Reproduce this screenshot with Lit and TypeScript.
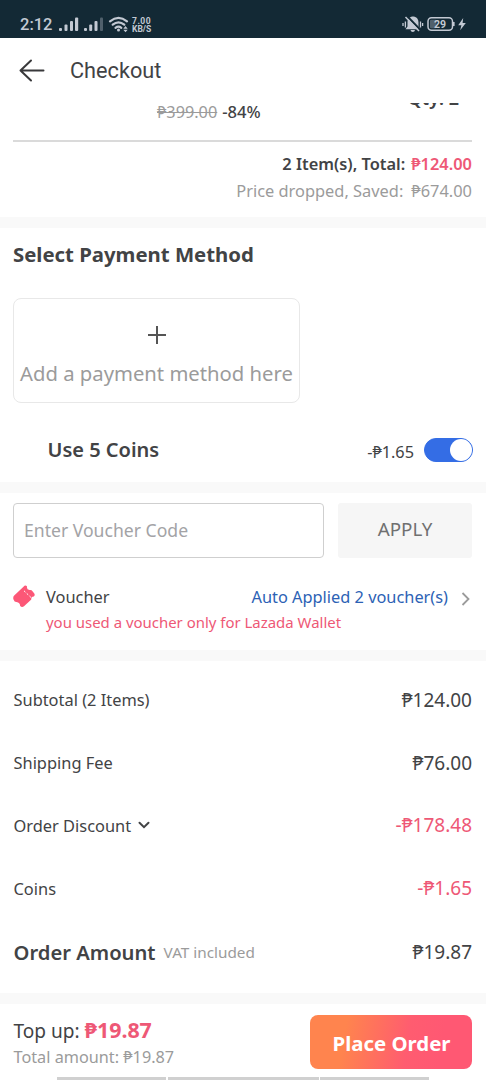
import { LitElement, html, css } from "lit";
import { customElement, property } from "lit/decorators.js";

@customElement("status-bar")
class StatusBar extends LitElement {
  static styles = css`
    :host {
      display: flex;
      justify-content: space-between;
      height: 38px;
      box-sizing: border-box;
      padding: 14px 18px 0 20px;
      background: #132935;
      color: #c3c9d3;
      font-family: Roboto, sans-serif;
    }
    .left,
    .right {
      display: flex;
      align-items: center;
      height: 20px;
    }
    .time {
      font-size: 16.5px;
      font-weight: 500;
      width: 38px;
      line-height: 20px;
      padding-top: 2px;
    }
    .speed {
      display: flex;
      flex-direction: column;
      font-size: 8.5px;
      line-height: 8px;
      font-weight: 700;
      margin-left: 2px;
      padding-top: 1px;
    }
    .rate {
      letter-spacing: 0.5px;
      height: 8px;
    }
    svg {
      display: block;
      flex: none;
    }
  `;
  render() {
    return html`
      <div class="left">
        <span class="time">2:12</span>
        <svg width="72" height="20" viewBox="58 14 72 20" fill="#c3c9d3">
          <rect x="59" y="28" width="3" height="3" rx="1" />
          <rect x="64.500" y="24.500" width="3" height="6.500" rx="1" />
          <rect x="70" y="21" width="3" height="10" rx="1" />
          <rect x="75" y="17.500" width="3.200" height="13.500" rx="1" />
          <rect x="84" y="28" width="3" height="3" rx="1" />
          <rect x="89.200" y="24.500" width="3" height="6.500" rx="1" />
          <rect x="94.500" y="21" width="3" height="10" rx="1" />
          <rect x="100" y="17.500" width="3" height="13.500" rx="1" opacity=".35" />
          <g fill="none" stroke="#c3c9d3" stroke-width="2.200" stroke-linecap="round">
            <path d="M110 21.300Q118.500 14.500 127 21.300" />
            <path d="M112.700 24.700Q118.500 20 124.300 24.700" />
            <path d="M115.500 27.800Q118.500 25.500 121.300 27.800" />
          </g>
          <circle cx="118.500" cy="30" r="1.500" />
          <path d="M125.500 26l2.200 2.800h-4.400zM125.500 32.300l2.200-2.600h-4.400z" />
        </svg>
        <span class="speed"><span class="rate">7.00</span><span>KB/S</span></span>
      </div>
      <div class="right">
        <svg width="66" height="20" viewBox="402 14 66 20">
          <path
            d="M412.500 16.500c-3.500.5-5 3-5 6v4l-2 2.800h15l-2-2.800v-4c0-3-1.500-5.500-5-6zM410.500 30h4.500q-.3 2-2.200 2t-2.300-2z"
            fill="#c3c9d3"
          />
          <path d="M406.500 15.500l14 14.500" stroke="#132935" stroke-width="2" />
          <path d="M405.500 17l13.500 14" stroke="#c3c9d3" stroke-width="1.500" />
          <path d="M403 23v3M405.400 21.500v6M420.500 21.500v6M422.600 23v3" stroke="#c3c9d3" stroke-width="1.300" />
          <rect x="428" y="17.700" width="24.500" height="12.600" rx="3.500" fill="none" stroke="#c3c9d3" stroke-width="1.500" />
          <rect x="453" y="22" width="1.600" height="4" fill="#c3c9d3" />
          <rect x="430" y="19.700" width="6.500" height="8.600" rx="1" fill="#c3c9d3" opacity=".35" />
          <text x="440" y="28" text-anchor="middle" font-size="10.500" font-weight="700" fill="#c3c9d3">29</text>
          <path d="M463.200 18l-5 7.200h3.200l-1.200 5 5.600-7.200h-3.200z" fill="#c3c9d3" />
        </svg>
      </div>
    `;
  }
}

@customElement("summary-row")
class SummaryRow extends LitElement {
  @property() label = "";
  @property() value = "";
  @property({ type: Boolean }) discount = false;
  @property({ type: Boolean }) expandable = false;
  static styles = css`
    :host {
      display: flex;
      align-items: center;
      justify-content: space-between;
      height: 62.75px;
      color: #424345;
    }
    .label {
      display: flex;
      align-items: center;
      gap: 7px;
      font-size: 16.4px;
      padding-left: 0.5px;
    }
    .value {
      font-size: 19px;
    }
    .value.discount {
      color: #ee5876;
    }
  `;
  render() {
    return html`
      <span class="label"
        >${this.label}${this.expandable
          ? html`<svg width="12" height="8" viewBox="0 0 12 8">
              <path d="M1.500 1.800L6 6.200l4.500-4.400" fill="none" stroke="#424345" stroke-width="2" stroke-linecap="round" />
            </svg>`
          : ""}</span
      >
      <span class="value ${this.discount ? "discount" : ""}">${this.value}</span>
    `;
  }
}

@customElement("app-root")
class AppRoot extends LitElement {
  static styles = css`
    :host {
      display: flex;
      flex-direction: column;
      width: 486px;
      height: 1080px;
      overflow: hidden;
      background: #fff;
      color: #424345;
      font-family: "Noto Sans", sans-serif;
      white-space: nowrap;
    }
    * {
      box-sizing: border-box;
    }
    svg {
      display: block;
      flex: none;
    }
    header {
      display: flex;
      align-items: center;
      gap: 25px;
      height: 65px;
      padding-left: 19px;
      font: 21.7px Roboto, sans-serif;
    }
    section {
      padding: 0 14px 0 13px;
    }
    .band {
      height: 11px;
      flex: none;
      background: #f9f9f9;
    }
    .item {
      height: 39px;
      border-bottom: 2px solid #dadada;
      display: flex;
      justify-content: space-between;
      overflow: hidden;
      padding: 0 13px 0 144px;
      font-size: 16.3px;
      line-height: 18px;
    }
    .price {
      display: flex;
      gap: 5px;
    }
    .was {
      color: #9b9b9b;
      text-decoration: line-through;
    }
    .off {
      font-weight: 500;
      font-size: 16.6px;
    }
    .qty {
      font-size: 18px;
      font-weight: 600;
      margin-top: -14px;
    }
    .order {
      height: 114px;
    }
    .line {
      display: flex;
      justify-content: flex-end;
      gap: 8px;
      font-size: 16.4px;
      line-height: 27px;
    }
    .total {
      font-weight: 600;
      gap: 6px;
      padding-top: 8px;
    }
    .pink {
      color: #ee5876;
    }
    .muted {
      color: #9b9b9b;
    }
    .payment {
      height: 254px;
    }
    h2 {
      margin: 0;
      padding-top: 12px;
      height: 70px;
      font-size: 20.35px;
      line-height: 29px;
      font-weight: 700;
    }
    .add {
      width: 287px;
      height: 105px;
      border: 1px solid #e8e8e8;
      border-radius: 8px;
      display: flex;
      flex-direction: column;
      align-items: center;
      padding-top: 27px;
      gap: 17px;
      color: #9b9b9b;
      font-size: 20.25px;
      line-height: 24px;
    }
    .coins {
      display: flex;
      align-items: center;
      height: 50px;
      margin-top: 22px;
      padding-left: 34.5px;
    }
    .coins-title {
      flex: 1;
      font-size: 20px;
      font-weight: 600;
      padding-bottom: 1px;
    }
    .coins-value {
      font-size: 16.3px;
      padding-top: 3px;
    }
    .toggle {
      width: 49px;
      height: 24px;
      margin: 0 -1px 0 10px;
      border-radius: 12px;
      background: #346de5;
      border: 1px solid #346de5;
      display: flex;
      justify-content: flex-end;
    }
    .knob {
      width: 22px;
      height: 22px;
      border-radius: 50%;
      background: #fff;
    }
    .voucher {
      height: 157px;
      padding-top: 10px;
    }
    .code {
      display: flex;
      gap: 14px;
      height: 55px;
    }
    .field {
      width: 311px;
      border: 1.5px solid #cfcfcf;
      border-radius: 4px;
      padding-left: 10px;
      font-size: 17.6px;
      line-height: 52px;
      color: #a3a3a6;
    }
    .apply {
      flex: 1;
      background: #f6f6f6;
      border-radius: 3px;
      text-align: center;
      line-height: 53px;
      font-size: 18.8px;
      color: #707070;
    }
    .applied {
      display: grid;
      grid-template-columns: 33px 1fr auto 24px;
      align-items: center;
      padding-top: 25px;
      font-size: 16.4px;
      line-height: 26px;
      height: 52px;
    }
    .link {
      color: #2c62b5;
      font-size: 16.35px;
    }
    .chevron {
      justify-self: end;
      margin: 4px 2px 0 0;
    }
    .note {
      padding-left: 33px;
      font-size: 14.95px;
      line-height: 25px;
    }
    .summary {
      height: 332px;
      padding-top: 7.5px;
    }
    .amount {
      display: flex;
      align-items: center;
      height: 64px;
      font-size: 19px;
    }
    .amount-title {
      font-size: 20.2px;
      font-weight: 600;
      padding-left: 0.5px;
    }
    .vat {
      flex: 1;
      padding-left: 8px;
      font-size: 15.3px;
    }
    footer {
      height: 73px;
      flex: none;
      display: flex;
      justify-content: space-between;
      padding: 11px 14px 0 13.5px;
    }
    .topup {
      font-size: 19.1px;
      line-height: 30px;
      height: 29px;
    }
    .due {
      font-size: 21.4px;
      font-weight: 700;
    }
    .full {
      font-size: 16.25px;
      line-height: 26px;
    }
    .place {
      width: 162px;
      height: 54px;
      border: 0;
      border-radius: 8px;
      padding: 2px 0 0 1px;
      background: linear-gradient(100deg, #ff844e 22%, #ff6f5f 42%, #ff5c70 60%, #ff5873 80%);
      color: #fff;
      font: 700 20.4px "Noto Sans", sans-serif;
    }
    .peek {
      display: grid;
      grid-template-columns: 109px 151px 109px;
      gap: 1.5px;
      height: 3px;
      padding-left: 57px;
    }
    .tile {
      background: #d0d0d0;
    }
  `;

  render() {
    return html`
      <status-bar></status-bar>
      <header>
        <svg width="26" height="24" viewBox="0 0 26 24">
          <path d="M12 1.500L1.500 11.500 12 21.500M1.500 11.500H24.500" fill="none" stroke="#39393b" stroke-width="2" stroke-linecap="round" stroke-linejoin="round" />
        </svg>
        <span>Checkout</span>
      </header>
      <section class="order">
        <div class="item">
          <div class="price"><span class="was">₱399.00</span><span class="off">-84%</span></div>
          <span class="qty">Qty: 2</span>
        </div>
        <div class="line total"><span>2 Item(s), Total:</span><span class="pink">₱124.00</span></div>
        <div class="line muted"><span>Price dropped, Saved:</span><span>₱674.00</span></div>
      </section>
      <div class="band"></div>
      <section class="payment">
        <h2>Select Payment Method</h2>
        <div class="add">
          <svg width="18" height="18" viewBox="0 0 18 18">
            <path d="M9 0v18M0 9h18" stroke="#555" stroke-width="2" />
          </svg>
          <span>Add a payment method here</span>
        </div>
        <div class="coins">
          <span class="coins-title">Use 5 Coins</span>
          <span class="coins-value">-₱1.65</span>
          <span class="toggle"><span class="knob"></span></span>
        </div>
      </section>
      <div class="band"></div>
      <section class="voucher">
        <div class="code">
          <div class="field">Enter Voucher Code</div>
          <div class="apply">APPLY</div>
        </div>
        <div class="applied">
          <svg width="23" height="23" viewBox="0 0 23 23">
            <path
              d="M1.200 10.500L10.500 1.800Q12-.2 14 1.200Q13.400 4.500 16.500 5Q18.500 4.500 19.500 6.200L21.300 8.500Q22.300 10.300 20.800 11.600Q17.800 11.500 18.300 14.500L11 21.200Q9 22.800 7.200 21Q7 17.500 3.500 17Q1.500 17.200 .5 14.500Q-.3 12 1.200 10.500Z"
              fill="#fc5777"
            />
            <path d="M11 5.800l7 6.700" stroke="#fff" stroke-width="1" stroke-dasharray="2 1.800" />
          </svg>
          <span>Voucher</span>
          <span class="link">Auto Applied 2 voucher(s)</span>
          <svg class="chevron" width="9" height="14" viewBox="0 0 9 14">
            <path d="M1.500 1L7.500 7l-6 6" fill="none" stroke="#9b9b9b" stroke-width="1.800" />
          </svg>
        </div>
        <div class="note pink">you used a voucher only for Lazada Wallet</div>
      </section>
      <div class="band"></div>
      <section class="summary">
        <summary-row label="Subtotal (2 Items)" value="₱124.00"></summary-row>
        <summary-row label="Shipping Fee" value="₱76.00"></summary-row>
        <summary-row label="Order Discount" value="-₱178.48" discount expandable></summary-row>
        <summary-row label="Coins" value="-₱1.65" discount></summary-row>
        <div class="amount">
          <span class="amount-title">Order Amount</span>
          <span class="vat muted">VAT included</span>
          <span>₱19.87</span>
        </div>
      </section>
      <div class="band"></div>
      <footer>
        <div>
          <div class="topup">Top up: <span class="due pink">₱19.87</span></div>
          <div class="full muted">Total amount: ₱19.87</div>
        </div>
        <button class="place">Place Order</button>
      </footer>
      <div class="peek"><i class="tile"></i><i class="tile"></i><i class="tile"></i></div>
    `;
  }
}
